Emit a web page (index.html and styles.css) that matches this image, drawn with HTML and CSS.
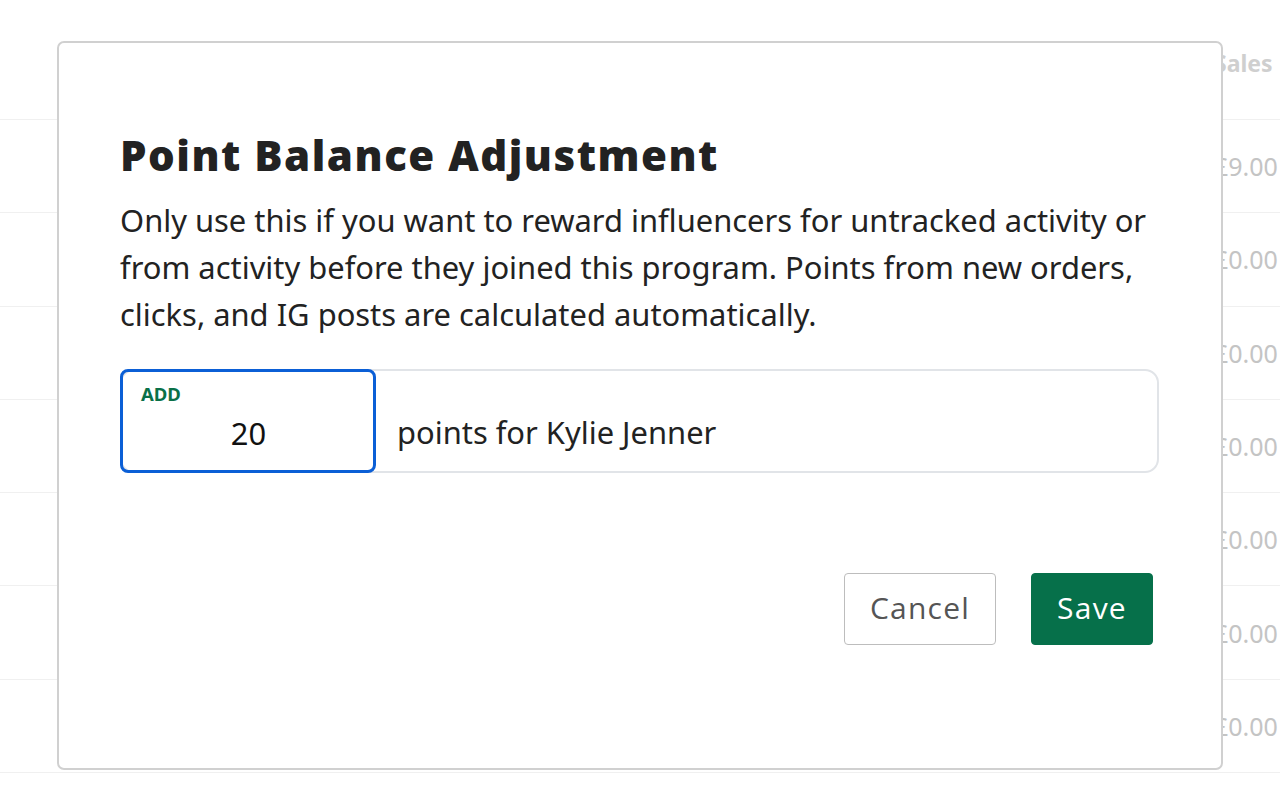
FILE: index.html
```html
<!DOCTYPE html>
<html>
<head>
<meta charset="utf-8">
<link rel="stylesheet" href="styles.css">
</head>
<body>
<div class="table">
  <div class="row head"><span class="cell">Sales</span></div>
  <div class="row"><span class="cell">£9.00</span></div>
  <div class="row"><span class="cell">£0.00</span></div>
  <div class="row"><span class="cell">£0.00</span></div>
  <div class="row"><span class="cell">£0.00</span></div>
  <div class="row"><span class="cell">£0.00</span></div>
  <div class="row"><span class="cell">£0.00</span></div>
  <div class="row"><span class="cell">£0.00</span></div>
</div>
<div class="modal">
  <h1 class="title">Point Balance Adjustment</h1>
  <p class="desc">Only use this if you want to reward influencers for untracked activity or from activity before they joined this program. Points from new orders, clicks, and IG posts are calculated automatically.</p>
  <div class="field">
    <div class="amount">
      <span class="amount-label">ADD</span>
      <span class="amount-value">20</span>
    </div>
    <span class="field-text">points for Kylie Jenner</span>
  </div>
  <div class="actions">
    <button class="btn btn-cancel">Cancel</button>
    <button class="btn btn-save">Save</button>
  </div>
</div>
</body>
</html>
```
FILE: styles.css
```css
html, body {
  margin: 0;
  padding: 0;
  background: #fff;
  overflow: hidden;
  width: 1280px;
  height: 798px;
}
body {
  font-family: "Noto Sans", "Open Sans", sans-serif;
  position: relative;
}
.table {
  display: flex;
  flex-direction: column;
}
.row {
  height: 93.3px;
  border-bottom: 1px solid #f0f0f0;
  display: flex;
  align-items: center;
  padding-left: 1214px;
  box-sizing: border-box;
  white-space: nowrap;
}
.row.head {
  height: 120px;
  padding-top: 6px;
}
.cell {
  font-size: 25px;
  color: #c4c4c4;
}
.head .cell {
  font-weight: 700;
  color: #cfcfcf;
  font-size: 23px;
}
.modal {
  position: absolute;
  left: 57px;
  top: 41px;
  width: 1166px;
  height: 729px;
  box-sizing: border-box;
  background: #fff;
  border: 2px solid #d0d0d0;
  border-radius: 7px;
  padding: 84px 62px 0 61px;
  display: flex;
  flex-direction: column;
}
.title {
  margin: 0;
  font-family: "Open Sans", sans-serif;
  font-weight: 800;
  font-size: 42px;
  line-height: 56px;
  color: #222;
  letter-spacing: 1.5px;
}
.desc {
  margin: 14px 0 0;
  font-size: 30.9px;
  line-height: 47px;
  color: #222;
  width: 1060px;
}
.field {
  margin-top: 31px;
  width: 1039px;
  height: 104px;
  box-sizing: border-box;
  border: 2px solid #e1e4e8;
  border-radius: 14px;
  display: flex;
  align-items: flex-start;
}
.amount {
  width: 256px;
  height: 104px;
  margin: -2px 0 -2px -2px;
  box-sizing: border-box;
  border: 3px solid #0b5fd6;
  border-radius: 8px;
  display: flex;
  flex-direction: column;
  padding: 10px 17px 0 18px;
}
.amount-label {
  font-size: 18.5px;
  font-weight: 700;
  color: #0a7048;
  line-height: 24px;
}
.amount-value {
  font-size: 30.9px;
  color: #111;
  text-align: center;
  line-height: 40px;
  margin-top: 7px;
}
.field-text {
  margin-left: 21px;
  font-size: 30.9px;
  line-height: 40px;
  color: #222;
  padding-top: 41px;
}
.actions {
  margin-top: 100px;
  width: 1033px;
  display: flex;
  justify-content: flex-end;
  gap: 35px;
}
.btn {
  height: 72px;
  border-radius: 4px;
  font-family: "Open Sans", sans-serif;
  font-size: 30px;
  letter-spacing: 1.2px;
  cursor: pointer;
  padding: 0 0 4px;
}
.btn-cancel {
  width: 152px;
  background: #fff;
  border: 1px solid #bdbdbd;
  color: #555;
}
.btn-save {
  width: 122px;
  background: #06704a;
  border: 1px solid #06704a;
  color: #fff;
}
```
